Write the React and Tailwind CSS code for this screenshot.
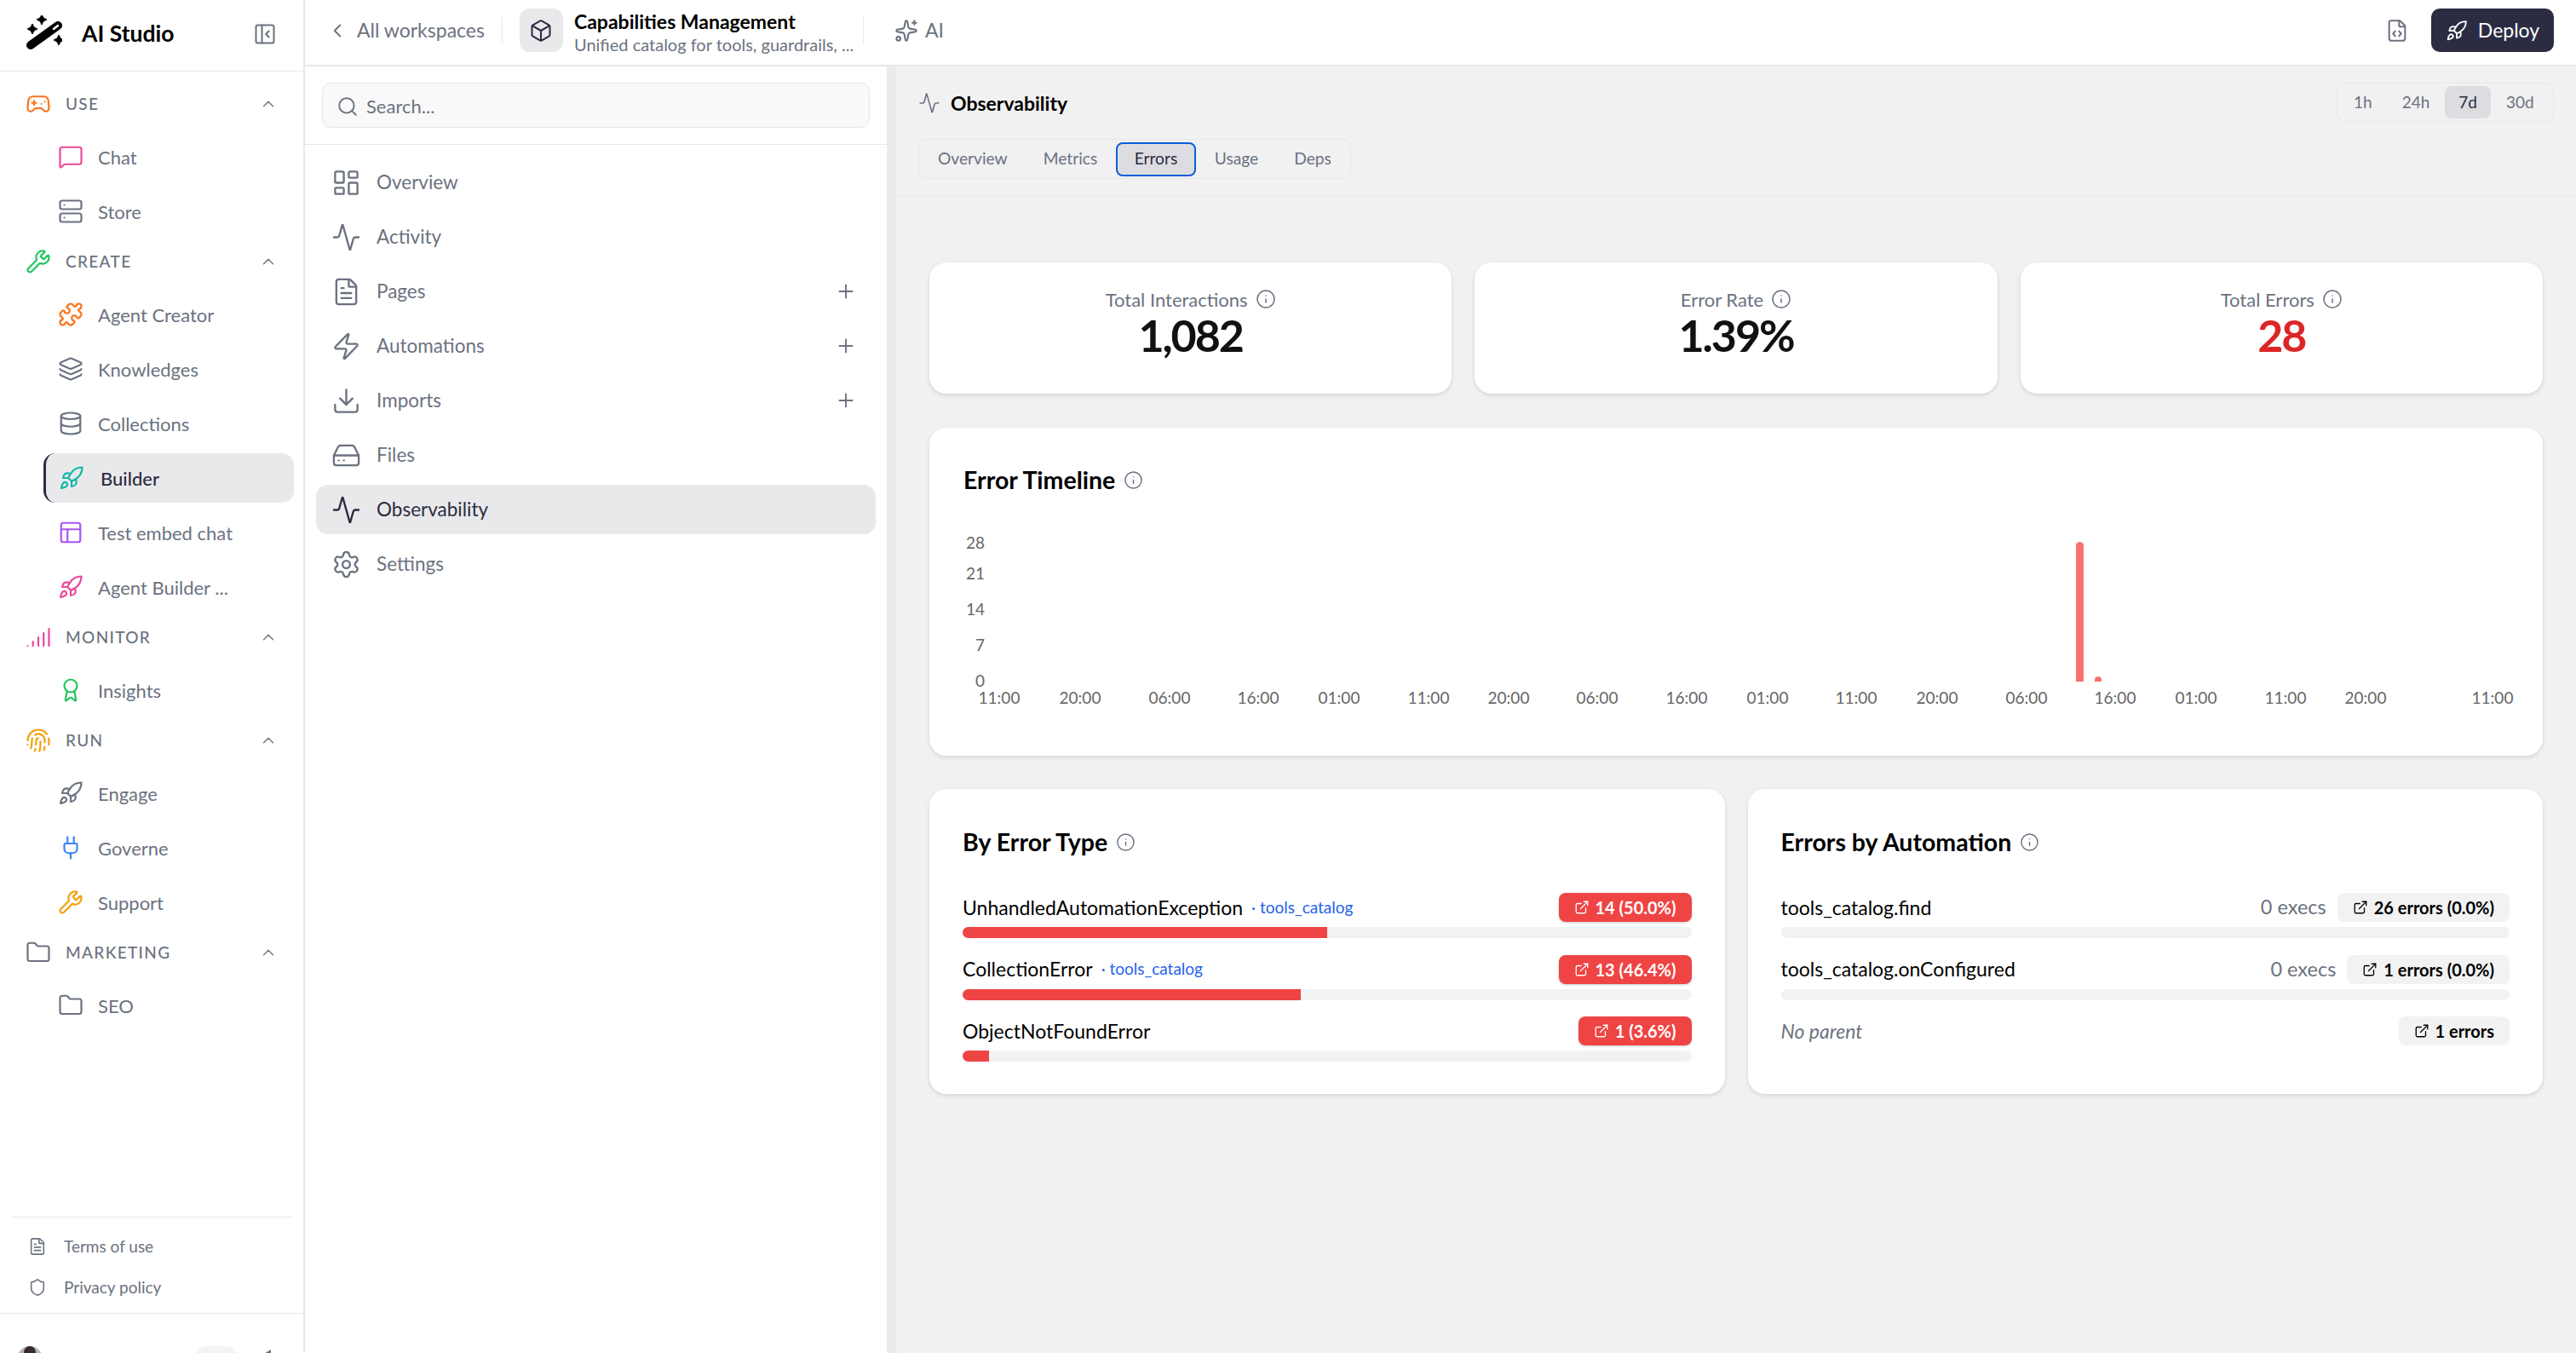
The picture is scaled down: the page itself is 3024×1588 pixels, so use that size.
import {
  Activity, Award, Box, ChevronLeft, ChevronUp, Database, Download, ExternalLink, FileCode, FileText,
  Fingerprint, Folder, Gamepad2, HardDrive, Info, Layers, LayoutDashboard, MessageSquare, PanelLeftClose,
  PanelsTopLeft, Plug, Plus, Puzzle, Rocket, Search, Server, Settings, Shield, Signal, Sparkles, Wrench, Zap,
} from "lucide-react";

const sections = [
  {
    label: "USE", icon: Gamepad2, color: "text-[#f97316]",
    items: [
      { label: "Chat", icon: MessageSquare, color: "text-[#ec4899]" },
      { label: "Store", icon: Server, color: "text-[#6b7280]" },
    ],
  },
  {
    label: "CREATE", icon: Wrench, color: "text-[#22c55e]",
    items: [
      { label: "Agent Creator", icon: Puzzle, color: "text-[#f97316]" },
      { label: "Knowledges", icon: Layers, color: "text-[#6b7280]" },
      { label: "Collections", icon: Database, color: "text-[#6b7280]" },
      { label: "Builder", icon: Rocket, color: "text-[#14b8a6]", active: true },
      { label: "Test embed chat", icon: PanelsTopLeft, color: "text-[#a855f7]" },
      { label: "Agent Builder ...", icon: Rocket, color: "text-[#ec4899]" },
    ],
  },
  {
    label: "MONITOR", icon: Signal, color: "text-[#ec4899]",
    items: [{ label: "Insights", icon: Award, color: "text-[#22c55e]" }],
  },
  {
    label: "RUN", icon: Fingerprint, color: "text-[#f59e0b]",
    items: [
      { label: "Engage", icon: Rocket, color: "text-[#6b7280]" },
      { label: "Governe", icon: Plug, color: "text-[#3b82f6]" },
      { label: "Support", icon: Wrench, color: "text-[#f59e0b]" },
    ],
  },
  {
    label: "MARKETING", icon: Folder, color: "text-[#6b7280]",
    items: [{ label: "SEO", icon: Folder, color: "text-[#6b7280]" }],
  },
];

const workspaceNav = [
  { label: "Overview", icon: LayoutDashboard },
  { label: "Activity", icon: Activity },
  { label: "Pages", icon: FileText, add: true },
  { label: "Automations", icon: Zap, add: true },
  { label: "Imports", icon: Download, add: true },
  { label: "Files", icon: HardDrive },
  { label: "Observability", icon: Activity, active: true },
  { label: "Settings", icon: Settings },
];

const xTicks = [
  [42, "11:00"], [137, "20:00"], [242, "06:00"], [346, "16:00"], [441, "01:00"], [546, "11:00"],
  [640, "20:00"], [744, "06:00"], [849, "16:00"], [944, "01:00"], [1048, "11:00"], [1143, "20:00"],
  [1248, "06:00"], [1352, "16:00"], [1447, "01:00"], [1552, "11:00"], [1646, "20:00"], [1795, "11:00"],
];

const yTicks = [[21, "28"], [57, "21"], [99, "14"], [141, "7"], [183, "0"]];

const errorTypes = [
  { name: "UnhandledAutomationException", tag: "tools_catalog", badge: "14 (50.0%)", width: 428 },
  { name: "CollectionError", tag: "tools_catalog", badge: "13 (46.4%)", width: 397 },
  { name: "ObjectNotFoundError", badge: "1 (3.6%)", width: 31 },
];

const automations = [
  { name: "tools_catalog.find", execs: "0 execs", badge: "26 errors (0.0%)", bar: true },
  { name: "tools_catalog.onConfigured", execs: "0 execs", badge: "1 errors (0.0%)", bar: true },
  { name: "No parent", badge: "1 errors", muted: true },
];

function WandLogo() {
  return (
    <svg viewBox="0 0 42 45" className="w-[42px] h-[45px]">
      <path d="M5 35 L37 12" stroke="#000" strokeWidth="10" strokeLinecap="round" />
      <path d="M32 16 L37 12" stroke="#fff" strokeWidth="2.5" strokeLinecap="round" />
      <path d="M18 -1 Q19 4 24 5 Q19 6 18 11 Q17 6 12 5 Q17 4 18 -1 Z" fill="#000" stroke="#000" strokeWidth="1" />
      <path d="M7 10 Q8 15 13 16 Q8 17 7 22 Q6 17 1 16 Q6 15 7 10 Z" fill="#000" stroke="#000" strokeWidth="1" />
      <path d="M38 23 Q39 28 44 29 Q39 30 38 35 Q37 30 32 29 Q37 28 38 23 Z" fill="#000" stroke="#000" strokeWidth="1" />
    </svg>
  );
}

function SideSection({ section }) {
  const SectionIcon = section.icon;
  return (
    <div className="mt-[4px]">
      <div className="h-[52px] flex items-center pl-[30px] pr-[30px] gap-[17px] mb-[7px]">
        <SectionIcon size={30} strokeWidth={1.75} className={section.color} />
        <span className="flex-1 text-[19px] font-medium tracking-[0.07em] text-[#6b7280]">{section.label}</span>
        <ChevronUp size={22} strokeWidth={1.5} className="text-[#6b7280]" />
      </div>
      <div className="flex flex-col gap-[6px]">
        {section.items.map((item) => {
          const ItemIcon = item.icon;
          return (
            <div
              key={item.label}
              className={
                item.active
                  ? "ml-[51px] w-[294px] h-[58px] flex items-center gap-[19px] pl-[15px] rounded-[14px] bg-[#e9e9eb] border-l-[3px] border-[#2b2c42] text-[#2b2c42] font-medium text-[22px]"
                  : "ml-[51px] w-[294px] h-[58px] flex items-center gap-[17px] pl-[17px] text-[#6b7280] text-[22px]"
              }
            >
              <ItemIcon size={30} strokeWidth={1.75} className={item.color} />
              <span>{item.label}</span>
            </div>
          );
        })}
      </div>
    </div>
  );
}

function Sidebar() {
  return (
    <aside className="w-[358px] shrink-0 h-full flex flex-col border-r-2 border-[#e8e8ea] bg-white">
      <div className="h-[84px] shrink-0 border-b border-[#e5e7eb] flex items-center pl-[31px] pr-[31px] pb-[3px]">
        <WandLogo />
        <span className="ml-[23px] flex-1 text-[26.5px] font-bold text-black">AI Studio</span>
        <PanelLeftClose size={28} strokeWidth={1.75} className="text-[#6b7280]" />
      </div>
      <nav className="flex-1 min-h-0 pt-[8px]">
        {sections.map((s) => (
          <SideSection key={s.label} section={s} />
        ))}
      </nav>
      <div className="mx-[13px] border-t border-[#e5e7eb] pt-[10px] pb-[6px]">
        <div className="h-[48px] flex items-center gap-[20px] pl-[20px] text-[#6b7280] text-[19px]">
          <FileText size={22} strokeWidth={1.75} />
          <span>Terms of use</span>
        </div>
        <div className="h-[48px] flex items-center gap-[20px] pl-[20px] text-[#6b7280] text-[19px]">
          <Shield size={22} strokeWidth={1.75} />
          <span>Privacy policy</span>
        </div>
      </div>
      <div className="h-[47px] shrink-0 border-t border-[#e5e7eb] flex items-start pt-[38px] pl-[20px] overflow-hidden">
        <div className="w-[30px] h-[30px] rounded-full bg-[#b5b5b5] flex justify-center">
          <div className="w-[14px] h-[14px] rounded-full bg-[#3a2a2a]" />
        </div>
        <div className="ml-[178px] w-[52px] h-[30px] rounded-full bg-[#f3f3f4]" />
        <svg viewBox="0 0 10 10" className="ml-[28px] mt-[4px] w-[10px] h-[10px]">
          <path d="M0 6 L10 0 L10 10 L0 10 Z" fill="#6b7280" />
        </svg>
      </div>
    </aside>
  );
}

function TopBar() {
  return (
    <header className="h-[78px] shrink-0 border-b-2 border-[#e8e8ea] bg-white flex items-center pl-[25px] pr-[26px] pb-[5px]">
      <ChevronLeft size={26} strokeWidth={1.75} className="text-[#6b7280]" />
      <span className="ml-[10px] text-[23px] text-[#6b7280]">All workspaces</span>
      <div className="mx-[20px] w-px h-[32px] bg-[#e5e7eb]" />
      <div className="w-[51px] h-[51px] rounded-[12px] bg-[#e9e9eb] flex items-center justify-center">
        <Box size={28} strokeWidth={1.75} className="text-[#2b2c42]" />
      </div>
      <div className="ml-[13px] mt-[4px] w-[339px] flex flex-col">
        <span className="text-[23px] leading-[28px] font-bold text-black whitespace-nowrap">Capabilities Management</span>
        <span className="text-[20px] leading-[26px] text-[#6b7280] whitespace-nowrap">Unified catalog for tools, guardrails, ...</span>
      </div>
      <div className="w-px h-[32px] bg-[#e5e7eb]" />
      <Sparkles size={28} strokeWidth={1.75} className="ml-[36px] text-[#6b7280]" />
      <span className="ml-[8px] text-[23px] text-[#6b7280]">AI</span>
      <FileCode size={28} strokeWidth={1.75} className="ml-auto mr-[26px] text-[#6b7280]" />
      <button className="w-[144px] h-[51px] rounded-[10px] bg-[#2b2c42] text-white text-[23px] flex items-center justify-center gap-[12px]">
        <Rocket size={26} strokeWidth={1.75} />
        Deploy
      </button>
    </header>
  );
}

function WorkspacePanel() {
  return (
    <section className="w-[683px] shrink-0 h-full bg-white flex flex-col">
      <div className="h-[92px] shrink-0 border-b border-[#e5e7eb] pt-[19px] px-[20px]">
        <div className="h-[53px] rounded-[10px] border border-[#e5e7eb] bg-[#f9f9f9] flex items-center gap-[9px] pl-[16px] pt-[2px] text-[#6b7280] text-[22px]">
          <Search size={26} strokeWidth={1.75} />
          <span>Search...</span>
        </div>
      </div>
      <div className="pt-[15px] px-[13px] flex flex-col gap-[6px]">
        {workspaceNav.map((item) => {
          const NavIcon = item.icon;
          return (
            <div
              key={item.label}
              className={
                item.active
                  ? "h-[58px] rounded-[14px] bg-[#e9e9eb] text-[#2b2c42] flex items-center pl-[18px] pr-[22px] gap-[18px] text-[22.5px]"
                  : "h-[58px] text-[#6b7280] flex items-center pl-[18px] pr-[22px] gap-[18px] text-[22.5px]"
              }
            >
              <NavIcon size={35} strokeWidth={1.6} />
              <span className="flex-1">{item.label}</span>
              {item.add && <Plus size={26} strokeWidth={1.75} />}
            </div>
          );
        })}
      </div>
    </section>
  );
}

function PanelHeader() {
  const tabs = ["Overview", "Metrics", "Errors", "Usage", "Deps"];
  const ranges = ["1h", "24h", "7d", "30d"];
  return (
    <div className="h-[152px] shrink-0 border-b border-[#e5e7eb] px-[26px] pt-[19px] flex justify-between items-start">
      <div>
        <div className="h-[48px] flex items-center gap-[12px]">
          <Activity size={26} strokeWidth={1.5} className="text-[#6b7280]" />
          <span className="text-[23px] font-bold text-black">Observability</span>
        </div>
        <div className="mt-[18px] h-[47px] rounded-[10px] border border-[#e5e7eb] flex items-center px-[2px] gap-[2px] text-[19.2px] text-[#6b7280]">
          {tabs.map((t) => (
            <div
              key={t}
              className={
                t === "Errors"
                  ? "h-[40px] px-[19.5px] flex items-center rounded-[8px] bg-[#dddde1] border-2 border-[#0a5fd8] text-[#2b2c42]"
                  : "h-[40px] px-[20px] flex items-center"
              }
            >
              {t}
            </div>
          ))}
        </div>
      </div>
      <div className="w-[255px] h-[46px] rounded-[10px] border border-[#e5e7eb] flex items-center px-[2px] gap-[1px] text-[19px] text-[#6b7280]">
        {ranges.map((r) => (
          <div
            key={r}
            className={r === "7d" ? "h-[38px] px-[16px] flex items-center rounded-[8px] bg-[#dddde1] text-[#2b2c42]" : "h-[38px] px-[17px] flex items-center"}
          >
            {r}
          </div>
        ))}
      </div>
    </div>
  );
}

function StatCard({ label, value, danger }) {
  return (
    <div className="h-[154px] rounded-[20px] bg-white shadow-[0_2px_5px_rgba(0,0,0,0.12)] flex flex-col items-center pt-[30px]">
      <div className="h-[26px] flex items-center gap-[9px] text-[22px] text-[#6b7280]">
        {label}
        <Info size={24} strokeWidth={1.5} />
      </div>
      <div
        className={
          danger
            ? "-mt-[2px] text-[52px] leading-[62px] font-bold tracking-[-0.04em] text-[#dc2626]"
            : "-mt-[2px] text-[52px] leading-[62px] font-bold tracking-[-0.04em] text-[#111]"
        }
      >
        {value}
      </div>
    </div>
  );
}

function CardTitle({ children }) {
  return (
    <div className="h-[42px] flex items-center gap-[10px] text-[28.5px] font-bold text-black">
      {children}
      <Info size={23} strokeWidth={1.5} className="text-[#6b7280]" />
    </div>
  );
}

function TimelineCard() {
  return (
    <div className="h-[385px] rounded-[20px] bg-white shadow-[0_2px_5px_rgba(0,0,0,0.12)] px-[40px] pt-[40px]">
      <CardTitle>Error Timeline</CardTitle>
      <svg viewBox="0 0 1814 230" className="mt-[34px] w-[1814px] h-[230px] block overflow-visible">
        {yTicks.map(([y, t]) => (
          <text key={t} x="25" y={y} textAnchor="end" dominantBaseline="middle" fontSize="19" fill="#666">{t}</text>
        ))}
        {xTicks.map(([x, t], i) => (
          <text key={i} x={x} y="203" textAnchor="middle" dominantBaseline="middle" fontSize="19" fill="#666">{t}</text>
        ))}
        <path d="M1306 182 V22.5 a4.5 4.5 0 0 1 9 0 V182 Z" fill="#f87171" />
        <path d="M1328 182 V180 a4 4 0 0 1 8 0 V182 Z" fill="#f87171" />
      </svg>
    </div>
  );
}

function BreakdownRow({ name, tag, execs, badge, width, danger, muted, last }) {
  return (
    <div className={last ? "" : "mb-[19.5px]"}>
      <div className="h-[34px] flex items-center">
        <span className={muted ? "text-[23px] italic text-[#6b7280]" : "text-[23px] text-black"}>{name}</span>
        {tag && <span className="ml-[10px] text-[19px] text-[#2563eb]">· {tag}</span>}
        {execs && <span className="ml-auto mr-[13px] text-[23.5px] text-[#6b7280]">{execs}</span>}
        <span
          className={
            danger
              ? "ml-auto h-[34px] px-[18px] rounded-[8px] bg-[#ef4444] text-white font-bold text-[20px] flex items-center gap-[7px] shadow-[0_1px_3px_rgba(0,0,0,0.2)]"
              : `${execs ? "" : "ml-auto"} h-[34px] px-[18px] rounded-[8px] bg-[#f2f2f3] text-black font-bold text-[20px] flex items-center gap-[7px]`
          }
        >
          <ExternalLink size={18} strokeWidth={1.75} />
          {badge}
        </span>
      </div>
      {width !== undefined && (
        <div className="mt-[6px] h-[13px] rounded-full bg-[#f2f2f3] overflow-hidden">
          {width > 0 && <div className="h-full bg-[#ef4444]" style={{ width }} />}
        </div>
      )}
    </div>
  );
}

function ErrorTypeCard() {
  return (
    <div className="h-[358px] rounded-[20px] bg-white shadow-[0_2px_5px_rgba(0,0,0,0.12)] px-[39px] pt-[41px]">
      <CardTitle>By Error Type</CardTitle>
      <div className="mt-[39px]">
        {errorTypes.map((e, i) => (
          <BreakdownRow key={e.name} {...e} danger last={i === errorTypes.length - 1} />
        ))}
      </div>
    </div>
  );
}

function AutomationCard() {
  return (
    <div className="h-[358px] rounded-[20px] bg-white shadow-[0_2px_5px_rgba(0,0,0,0.12)] px-[39px] pt-[41px]">
      <CardTitle>Errors by Automation</CardTitle>
      <div className="mt-[39px]">
        {automations.map((a, i) => (
          <BreakdownRow
            key={a.name}
            name={a.name}
            execs={a.execs}
            badge={a.badge}
            muted={a.muted}
            width={a.bar ? 0 : undefined}
            last={i === automations.length - 1}
          />
        ))}
      </div>
    </div>
  );
}

export default function App() {
  return (
    <div className="w-[3024px] h-[1588px] flex overflow-hidden bg-white font-['Lato',sans-serif]">
      <Sidebar />
      <div className="flex-1 min-w-0 flex flex-col">
        <TopBar />
        <div className="flex-1 min-h-0 flex">
          <WorkspacePanel />
          <div className="w-[11px] shrink-0 bg-[#ebebed]" />
          <main className="flex-1 min-w-0 bg-[#f1f1f2] flex flex-col">
            <PanelHeader />
            <div className="px-[39px] pt-[78px] flex flex-col">
              <div className="grid grid-cols-3 gap-[27px]">
                <StatCard label="Total Interactions" value="1,082" />
                <StatCard label="Error Rate" value="1.39%" />
                <StatCard label="Total Errors" value="28" danger />
              </div>
              <div className="mt-[40px]">
                <TimelineCard />
              </div>
              <div className="mt-[39px] grid grid-cols-2 gap-[27px]">
                <ErrorTypeCard />
                <AutomationCard />
              </div>
            </div>
          </main>
        </div>
      </div>
    </div>
  );
}
